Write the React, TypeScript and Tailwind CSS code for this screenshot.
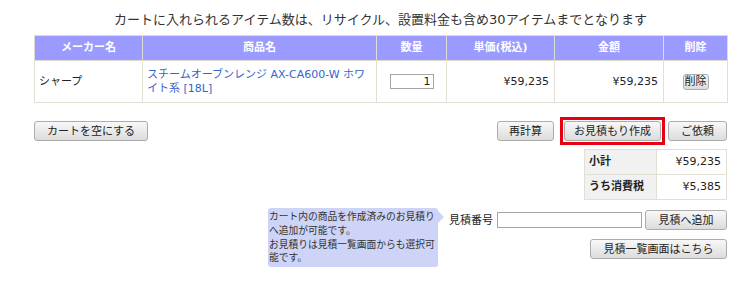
import type { ReactNode } from 'react';

const FONT = `font-['DejaVu_Sans','Noto_Sans_CJK_JP',sans-serif]`;

interface BtnProps {
  children: ReactNode;
  className?: string;
}

function Btn({ children, className = '' }: BtnProps) {
  return (
    <button
      type="button"
      className={`h-[20px] shrink-0 rounded-[3px] border border-[#acacac] bg-linear-to-b from-[#f8f8f8] to-[#dcdcdc] p-0 text-[11px] leading-none text-[#222] ${className}`}
    >
      {children}
    </button>
  );
}

export default function App() {
  const th = 'h-[25px] border border-[#dcdcd4] p-0 text-center text-[11px] font-bold text-white';
  const td = 'h-[42px] border border-[#e1e0d4] px-[4px] text-[11px] leading-[14px]';

  return (
    <div className={`h-[291px] w-[742px] overflow-hidden bg-white text-[#333] ${FONT}`}>
      <div className="ml-[34px] w-[693px] pt-[11px]">
        <p className="text-center text-[13px] leading-[17px] text-[#333]">
          カートに入れられるアイテム数は、リサイクル、設置料金も含め30アイテムまでとなります
        </p>

        <table className="mt-[7px] w-[693px] table-fixed border-collapse">
          <colgroup>
            <col className="w-[108px]" />
            <col className="w-[234px]" />
            <col className="w-[70px]" />
            <col className="w-[108px]" />
            <col className="w-[109px]" />
            <col className="w-[64px]" />
          </colgroup>
          <thead>
            <tr className="bg-[#9b9bff]">
              <th className={th}>メーカー名</th>
              <th className={th}>商品名</th>
              <th className={th}>数量</th>
              <th className={th}>単価(税込)</th>
              <th className={th}>金額</th>
              <th className={th}>削除</th>
            </tr>
          </thead>
          <tbody>
            <tr>
              <td className={`${td} text-[#222]`}>シャープ</td>
              <td className={`${td} pr-[6px] text-[#3366cc]`}>
                スチームオーブンレンジ AX-CA600-W ホワイト系 [18L]
              </td>
              <td className={`${td} text-center`}>
                <input
                  type="text"
                  defaultValue="1"
                  className="mx-auto block h-[15px] w-[44px] border border-[#a5a5a5] px-[2px] text-right text-[11px] leading-none text-[#222] outline-none"
                />
              </td>
              <td className={`${td} pr-[5px] text-right text-[#222]`}>¥59,235</td>
              <td className={`${td} pr-[5px] text-right text-[#222]`}>¥59,235</td>
              <td className={`${td} text-center`}>
                <Btn className="mx-auto block !h-[16px] w-[26px] rounded-[2px]">削除</Btn>
              </td>
            </tr>
          </tbody>
        </table>

        <div className="mt-[14px] flex items-center justify-between">
          <Btn className="w-[114px]">カートを空にする</Btn>
          <div className="flex items-center">
            <Btn className="w-[57px]">再計算</Btn>
            <div className="ml-[6px] border-[3px] border-[#e60012] p-px">
              <Btn className="block w-[97px]">お見積もり作成</Btn>
            </div>
            <Btn className="ml-[3px] w-[59px]">ご依頼</Btn>
          </div>
        </div>

        <div className="mt-[4px] flex justify-end">
          <table className="w-[143px] table-fixed border-collapse text-[11px]">
            <tbody>
              <tr>
                <td className="h-[25px] w-[72px] border border-[#e1e0d4] bg-[#f1f1f1] px-[4px] font-bold text-[#222]">小計</td>
                <td className="h-[25px] border border-[#e1e0d4] pr-[5px] text-right text-[#222]">¥59,235</td>
              </tr>
              <tr>
                <td className="h-[25px] border border-[#e1e0d4] bg-[#f1f1f1] px-[4px] font-bold text-[#222]">うち消費税</td>
                <td className="h-[25px] border border-[#e1e0d4] pr-[5px] text-right text-[#222]">¥5,385</td>
              </tr>
            </tbody>
          </table>
        </div>

        <div className="mt-[8px] flex items-start justify-end">
          <div className="relative w-[170px] rounded-[3px] bg-[#cdd4f7] px-[1px] py-[2px] text-[9.75px] leading-[13.75px] whitespace-nowrap text-[#333]">
            <div>カート内の商品を作成済みのお見積り</div>
            <div>へ追加が可能です。</div>
            <div>お見積りは見積一覧画面からも選択可</div>
            <div>能です。</div>
            <span className="absolute top-[3px] -right-[6px] h-0 w-0 border-y-[6px] border-l-[6px] border-y-transparent border-l-[#cdd4f7]" />
          </div>
          <div className="ml-[11px] flex flex-col items-end pt-[2px]">
            <div className="flex items-center">
              <span className="text-[11px] leading-none text-[#222]">見積番号</span>
              <input
                type="text"
                className="ml-[4px] h-[16px] w-[145px] border border-[#a5a5a5] outline-none"
              />
              <Btn className="ml-[3px] w-[82px]">見積へ追加</Btn>
            </div>
            <Btn className="mt-[9px] w-[137px]">見積一覧画面はこちら</Btn>
          </div>
        </div>
      </div>
    </div>
  );
}
